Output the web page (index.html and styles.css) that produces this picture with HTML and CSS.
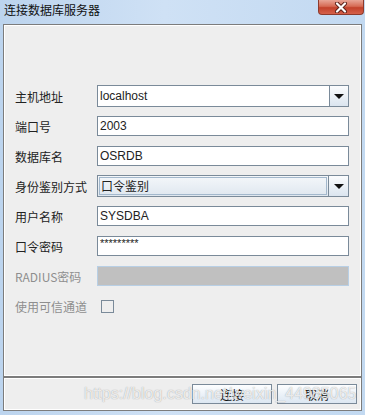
FILE: index.html
```html
<!DOCTYPE html>
<html>
    <head lang="zh">
        <meta charset="utf-8">
        <title>连接数据库服务器</title>
        <meta name="viewport" content="width=device-width, initial-scale=1.0">
        <link rel="stylesheet" href="styles.css">
    </head>
    <body>
        <div class="vindue">
            <header class="titel">
                <span class="titeltekst">连接数据库服务器</span>
                <span class="luk">
                    <svg width="18" height="11" viewBox="0 0 18 11">
                        <path d="M5 1.5 L13 9.5 M13 1.5 L5 9.5" stroke="#5a2018" stroke-width="4" stroke-linecap="round"/>
                        <path d="M5 1.5 L13 9.5 M13 1.5 L5 9.5" stroke="#ffffff" stroke-width="2.2" stroke-linecap="round"/>
                    </svg>
                </span>
            </header>

            <section class="panel">
                <div class="raekke">
                    <label>主机地址</label>
                    <div class="combo redig">
                        <span class="felt">localhost</span>
                        <span class="pil"><i></i></span>
                    </div>
                </div>
                <div class="raekke">
                    <label>端口号</label>
                    <span class="felt">2003</span>
                </div>
                <div class="raekke">
                    <label>数据库名</label>
                    <span class="felt">OSRDB</span>
                </div>
                <div class="raekke">
                    <label>身份鉴别方式</label>
                    <div class="combo valg">
                        <span class="vaerdi">口令鉴别</span>
                        <span class="pil"><i></i></span>
                    </div>
                </div>
                <div class="raekke">
                    <label>用户名称</label>
                    <span class="felt">SYSDBA</span>
                </div>
                <div class="raekke">
                    <label>口令密码</label>
                    <span class="felt kode">*********</span>
                </div>
                <div class="raekke slukket">
                    <label>RADIUS密码</label>
                    <span class="felt inaktiv"></span>
                </div>
                <div class="raekke slukket">
                    <label>使用可信通道</label>
                    <span class="boks"></span>
                </div>
            </section>

            <footer class="knapper">
                <button>连接</button>
                <button>取消</button>
                <span class="vandmaerke">https://blog.csdn.net/weixin_44985065</span>
            </footer>
        </div>
    </body>
</html>
```

FILE: styles.css
```css
* {
    margin: 0px;
    padding: 0px;
    box-sizing: border-box;
}

body {
    background-color: #c4daf1;
    font-family: "Liberation Sans", "Noto Sans CJK SC", sans-serif;
    font-size: 12px;
    color: #222222;
}

.vindue {
    width: 365px;
    height: 415px;
    background: linear-gradient(90deg, #bcd4ee, #cfe1f5 45%, #c2d9f1);
    padding: 0px 3px 4px 3px;
    display: flex;
    flex-direction: column;
}

.titel {
    height: 24px;
    display: flex;
    justify-content: space-between;
    align-items: flex-start;
}

.titeltekst {
    font-family: "Noto Sans CJK SC", sans-serif;
    font-size: 12px;
    line-height: 20px;
    padding-left: 1px;
    color: #111111;
}

.luk {
    width: 46px;
    height: 15px;
    margin-right: -2px;
    border: 1px solid #8d3a2c;
    border-top: none;
    border-radius: 0px 0px 4px 4px;
    background: linear-gradient(#e8a596, #d66b55 45%, #c2412b 55%, #d5614a);
    display: flex;
    justify-content: center;
    align-items: center;
}

/* hovedpanel */
.panel {
    flex: 1;
    background-color: #eeeeee;
    border: 1px solid #7c7c7c;
    box-shadow: inset 1px 1px 0px #ffffff, inset -1px -1px 0px #ffffff;
    padding: 56px 10px 0px 11px;
}

.raekke {
    height: 30px;
    display: grid;
    grid-template-columns: 82px 252px;
    align-items: center;
}

label {
    font-family: "Noto Sans CJK SC", sans-serif;
    font-size: 12px;
    color: #222222;
}

.slukket label {
    color: #8e8e8e;
}

.felt {
    display: block;
    height: 20px;
    line-height: 18px;
    background-color: #ffffff;
    border: 1px solid #7a8a99;
    padding-left: 2px;
    font-size: 12px;
    color: #222222;
}

.kode {
    line-height: 12px;
    font-size: 11px;
}

.inaktiv {
    background-color: #c0c0c0;
    border-color: #b8cfe5;
}

.combo {
    display: flex;
    height: 22px;
}

.combo .felt {
    flex: 1;
    height: 22px;
    line-height: 20px;
    border-right: none;
}

.valg {
    border: 1px solid #7a8a99;
    background: linear-gradient(#f4f7fa, #dfe7ef);
}

.vaerdi {
    flex: 1;
    margin: 1px;
    border: 1px solid #a3b8cc;
    line-height: 16px;
    padding-left: 1px;
    font-family: "Noto Sans CJK SC", sans-serif;
}

.pil {
    width: 20px;
    display: flex;
    justify-content: center;
    align-items: center;
    background: linear-gradient(#fbfcfd, #dbe5ef);
    border: 1px solid #7a8a99;
}

.valg .pil {
    border: none;
    border-left: 1px solid #7a8a99;
}

.pil i {
    width: 0px;
    height: 0px;
    border-left: 5px solid transparent;
    border-right: 5px solid transparent;
    border-top: 5px solid #111111;
    margin-top: 1px;
}

.boks {
    width: 13px;
    height: 13px;
    margin-left: 4px;
    border: 1px solid #7a8a99;
    background-color: #eeeeee;
}

/* knap panel */
.knapper {
    position: relative;
    height: 34px;
    background-color: #eeeeee;
    border: 1px solid #7c7c7c;
    box-shadow: inset 1px 1px 0px #ffffff, inset -1px -1px 0px #ffffff;
    display: flex;
    justify-content: flex-end;
    align-items: flex-start;
    gap: 5px;
    padding: 6px 4px 0px 0px;
}

button {
    width: 80px;
    height: 20px;
    border: 1px solid #7a8a99;
    background: linear-gradient(#fdfeff, #dce7f2);
    font-family: "Noto Sans CJK SC", sans-serif;
    font-size: 12px;
    color: #111111;
}

.vandmaerke {
    position: absolute;
    left: 80px;
    top: 7px;
    font-family: "Liberation Sans", sans-serif;
    font-size: 16px;
    color: rgba(255, 255, 255, 0.8);
    text-shadow: 0px 0px 1px rgba(60, 60, 60, 0.5);
    white-space: nowrap;
    pointer-events: none;
}
```
